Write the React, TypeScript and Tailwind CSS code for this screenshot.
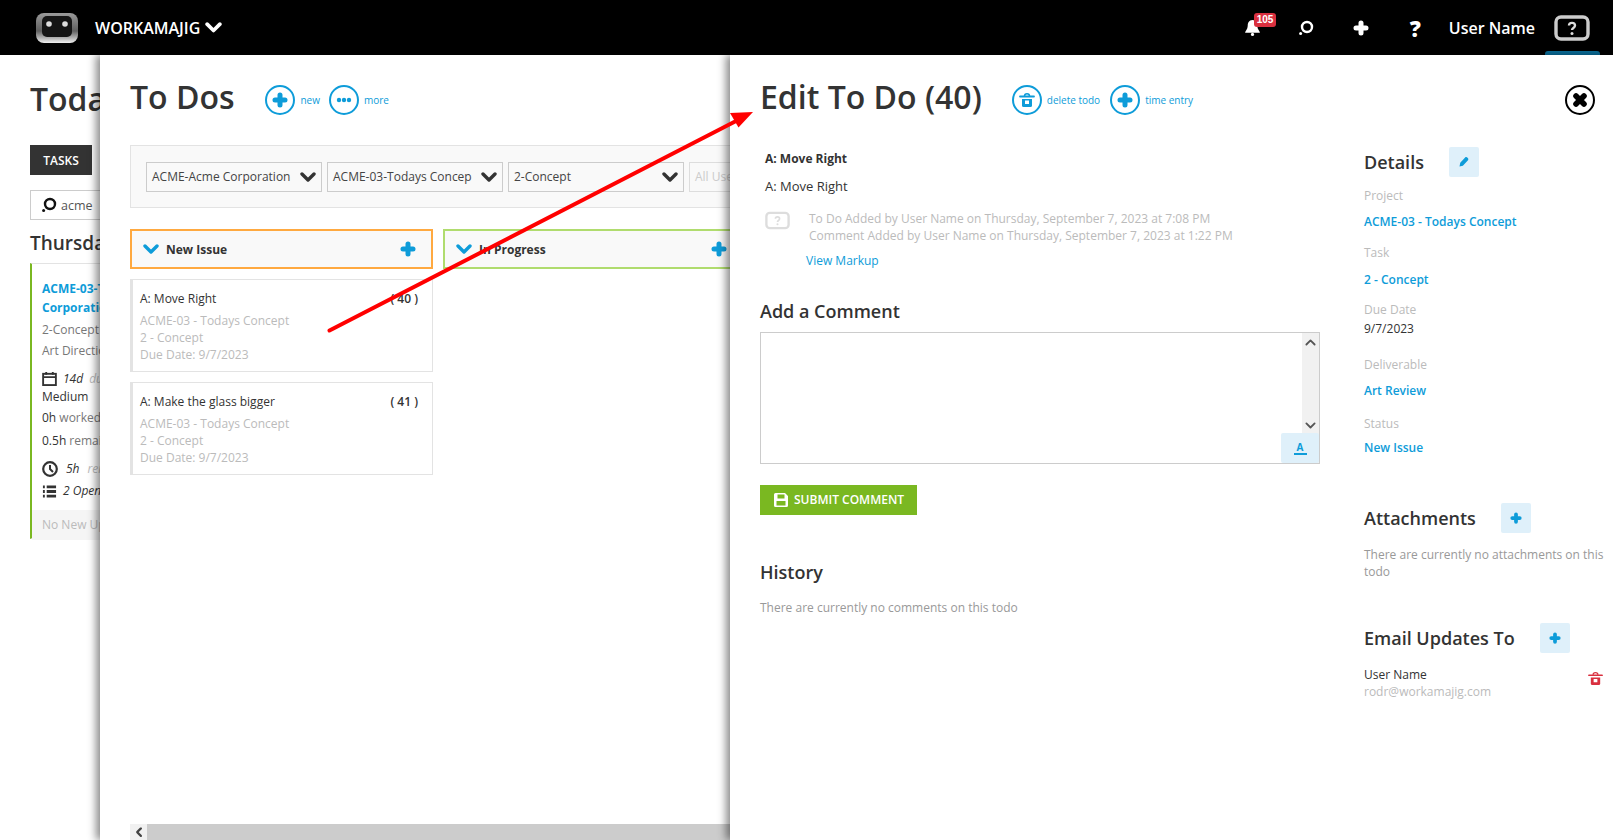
import type { ReactNode } from 'react';

const Plus = ({ className = '', size = 16 }: { className?: string; size?: number }) => (
  <svg viewBox="0 0 16 16" width={size} height={size} className={className}>
    <path d="M8 3v10M3 8h10" stroke="currentColor" strokeWidth="5" strokeLinecap="round" fill="none" />
  </svg>
);

const Chevron = ({ className = '', w = 16, sw = 3.4 }: { className?: string; w?: number; sw?: number }) => (
  <svg viewBox="0 0 16 10" width={w} height={(w * 10) / 16} className={className}>
    <path d="M2 2l6 6 6-6" stroke="currentColor" strokeWidth={sw} fill="none" strokeLinecap="round" strokeLinejoin="round" />
  </svg>
);

const SearchIcon = ({ className = '', size = 16 }: { className?: string; size?: number }) => (
  <svg viewBox="0 0 16 16" width={size} height={size} className={className}>
    <circle cx="9" cy="7" r="5" stroke="currentColor" strokeWidth="2.4" fill="none" />
    <circle cx="2.6" cy="13.6" r="1.5" fill="currentColor" />
  </svg>
);

const Trash = ({ className = '', size = 16 }: { className?: string; size?: number }) => (
  <svg viewBox="0 0 16 16" width={size} height={size} className={className}>
    <path d="M1 4.5h14" stroke="currentColor" strokeWidth="1.8" strokeLinecap="round" />
    <path d="M5.5 4c0-3 5-3 5 0" stroke="currentColor" strokeWidth="1.5" fill="none" />
    <path d="M3 7h10v6.5a1.5 1.5 0 0 1-1.5 1.5h-7A1.5 1.5 0 0 1 3 13.500z" fill="currentColor" />
    <rect x="6" y="8.500" width="4" height="3.500" fill="#fff" />
  </svg>
);

const HelpBox = ({ className = '', w = 36, h = 26, color = '#ccc' }: { className?: string; w?: number; h?: number; color?: string }) => (
  <svg viewBox="0 0 36 26" width={w} height={h} className={className}>
    <rect x="2" y="2" width="32" height="22" rx="5" fill="none" stroke={color} strokeWidth="3.4" />
    <path d="M15 10.500c0-3.500 6-3.500 6 0 0 2.500-3 2.500-3 4.500" fill="none" stroke={color === '#ccc' ? '#ddd' : color} strokeWidth="2.400" />
    <circle cx="18" cy="18.500" r="1.500" fill={color === '#ccc' ? '#ddd' : color} />
  </svg>
);

const CircleAction = ({ icon, label }: { icon: ReactNode; label: string }) => (
  <div className="flex items-center gap-[5px]">
    <span className="flex size-[30px] items-center justify-center rounded-full border-2 border-[#0e9cd9] text-[#0e9cd9]">{icon}</span>
    <span className="pt-[1px] text-[10px] text-[#0e9cd9]">{label}</span>
  </div>
);

const SquareBtn = ({ children }: { children: ReactNode }) => (
  <span className="flex size-[30px] items-center justify-center rounded-[2px] bg-[#dff0fa] text-[#0e9cd9]">{children}</span>
);

const FilterSelect = ({ label, muted }: { label: string; muted?: boolean }) => (
  <div className={`flex h-[30px] w-[176px] shrink-0 items-center justify-between border pl-[5px] pr-[5px] text-[12px] ${muted ? 'border-[#ddd] text-[#ccc]' : 'border-[#ccc] text-[#444]'}`}>
    <span className="whitespace-nowrap pt-[1px]">{label}</span>
    <Chevron className="shrink-0 text-[#333]" />
  </div>
);

const TodoCard = ({ title, id }: { title: string; id: number }) => (
  <div className="h-[93px] border border-l-[3px] border-[#e3e3e3] pl-[7px] pr-[14px] pt-[10px] text-[12px]">
    <div className="flex h-[18px] items-center justify-between text-[#333]">
      <span>{title}</span>
      <span className="font-semibold">( {id} )</span>
    </div>
    <div className="mt-[4px] leading-[17px] text-[#bbb]">
      <div>ACME-03 - Todays Concept</div>
      <div>2 - Concept</div>
      <div>Due Date: 9/7/2023</div>
    </div>
  </div>
);

const ColumnHead = ({ title, className }: { title: string; className: string }) => (
  <div className={`flex h-[40px] shrink-0 items-center border-2 bg-[#f9f9f9] pl-[11px] pr-[15px] ${className}`}>
    <Chevron className="text-[#0e9cd9]" />
    <span className="ml-[7px] flex-1 pt-[1px] text-[12px] font-bold text-[#333]">{title}</span>
    <Plus className="text-[#0e9cd9]" />
  </div>
);

const DetailField = ({ label, value, plain, top, gap = 'mt-[8px]' }: { label: string; value: string; plain?: boolean; top: string; gap?: string }) => (
  <div className={top}>
    <div className="h-[18px] text-[12px] leading-[18px] text-[#bbb]">{label}</div>
    <div className={`h-[18px] text-[12px] leading-[18px] ${gap} ${plain ? 'text-[#333]' : 'font-semibold text-[#0e9cd9]'}`}>{value}</div>
  </div>
);

export default function App() {
  return (
    <div className="relative flex h-[840px] w-[1613px] flex-col overflow-hidden bg-white font-['Open_Sans',sans-serif]">
      {/* Top bar */}
      <header className="relative flex h-[55px] shrink-0 items-center bg-black pl-[35px] pr-[23px] text-white">
        <svg viewBox="0 0 44 32" width="44" height="32">
          <defs>
            <linearGradient id="robot" x1="0" y1="0" x2="0" y2="1">
              <stop offset="0" stopColor="#9a9a9a" />
              <stop offset="0.6" stopColor="#5f5f5f" />
              <stop offset="1" stopColor="#f0f0f0" />
            </linearGradient>
          </defs>
          <rect x="1" y="1" width="42" height="30" rx="8" fill="url(#robot)" />
          <rect x="7" y="4" width="30" height="21" rx="5" fill="#151515" />
          <circle cx="14" cy="12" r="2.800" fill="#ddd" />
          <circle cx="30" cy="12" r="2.800" fill="#ddd" />
        </svg>
        <span className="ml-[16px] text-[16px] font-semibold">WORKAMAJIG</span>
        <Chevron className="ml-[5px]" w={17} />
        <div className="ml-auto flex items-center">
          <span className="relative mr-[37px] block">
            <svg viewBox="0 0 16 16" width="17" height="17">
              <path d="M8 1c3.500 0 4.500 3 4.500 5.500 0 3 2.500 5 2.500 6.500H1c0-1.500 2.500-3.500 2.500-6.500C3.500 4 4.500 1 8 1z" fill="#fff" />
              <circle cx="8" cy="14.500" r="1.500" fill="#fff" />
            </svg>
            <span className="absolute left-[10px] top-[-6px] rounded-[3px] bg-[#d9303f] px-[3px] font-['Liberation_Sans',sans-serif] text-[10px] leading-[14px] font-bold">105</span>
          </span>
          <SearchIcon className="mr-[39px]" />
          <Plus className="mr-[41px]" />
          <span className="mr-[28px] text-[22px] leading-none font-extrabold">?</span>
          <span className="mr-[19px] text-[16px] font-semibold">User Name</span>
          <HelpBox />
        </div>
        <span className="absolute bottom-0 right-[13px] h-[4px] w-[55px] rounded-t-[3px] bg-[#0a6f9c]" />
      </header>

      <main className="relative flex-1">
        {/* Page underneath */}
        <div className="w-[320px] pl-[30px] text-[#333]">
          <h1 className="mt-[20px] h-[47px] text-[32px] leading-[47px] font-semibold">Today</h1>
          <div className="mt-[23px] flex h-[30px] w-[62px] items-center justify-center bg-[#333] pt-[1px] text-[12px] font-semibold text-white">TASKS</div>
          <div className="mt-[15px] flex h-[30px] w-[250px] items-center border border-[#ccc] pl-[10px] text-[12.500px] text-[#555]">
            <SearchIcon className="text-[#111]" />
            <span className="ml-[4px] pt-[2px]">acme</span>
          </div>
          <h2 className="mt-[9px] h-[28px] text-[19px] leading-[28px] font-semibold">Thursday</h2>
          <div className="mt-[6px] h-[276px] w-[290px] border border-l-[2px] border-[#e3e3e3] border-l-[#7ab821] text-[12px]">
            <div className="pl-[10px] pr-2 pt-[15px]">
              <div className="text-[12px] leading-[19px] font-bold whitespace-nowrap text-[#0e9cd9]">ACME-03-Todays<br />Corporation</div>
              <div className="mt-[2px] leading-[21px] text-[#777]">2-Concept</div>
              <div className="leading-[21px] text-[#777]">Art Direction</div>
              <div className="mt-[8px] flex h-[19px] items-center gap-[6px] italic">
                <svg viewBox="0 0 16 16" width="15" height="15">
                  <rect x="1.200" y="3" width="13.600" height="12" fill="none" stroke="#333" strokeWidth="2" />
                  <path d="M1 6.500h14M4.500 1v3M11.500 1v3" stroke="#333" strokeWidth="2" />
                </svg>
                14d <span className="text-[#bbb]">due</span>
              </div>
              <div className="leading-[18px]">Medium</div>
              <div className="mt-[1px] leading-[22px]">0h <span className="text-[#777]">worked</span></div>
              <div className="mt-[1px] leading-[22px]">0.5h <span className="text-[#777]">remaining</span></div>
              <div className="mt-[6px] flex h-[22px] items-center gap-[8px] italic">
                <svg viewBox="0 0 16 16" width="16" height="16">
                  <circle cx="8" cy="8" r="6.800" fill="none" stroke="#333" strokeWidth="2.200" />
                  <path d="M8 4v4l3 3" fill="none" stroke="#333" strokeWidth="2" />
                </svg>
                5h <span className="text-[#bbb]">remaining</span>
              </div>
              <div className="flex h-[22px] items-center gap-[6px] italic">
                <svg viewBox="0 0 16 16" width="15" height="15">
                  <path d="M1 3h2M5 3h10M1 8h2M5 8h10M1 13h2M5 13h10" stroke="#333" strokeWidth="3" />
                </svg>
                2 Open
              </div>
            </div>
            <div className="mt-[8px] h-[30px] bg-[#f5f5f5] pl-[10px] leading-[30px] text-[#bbb]">No New Updates</div>
          </div>
        </div>

        {/* To Dos panel */}
        <section className="absolute inset-y-0 left-[100px] flex w-[630px] flex-col overflow-hidden bg-white shadow-[-4px_0_8px_rgba(0,0,0,0.45)]">
          <div className="flex-1 pl-[30px]">
            <div className="mt-[15px] flex h-[60px] items-center">
              <h1 className="mb-[7px] text-[32px] font-semibold text-[#333]">To Dos</h1>
              <div className="ml-[31px] flex items-center gap-[9px]">
                <CircleAction icon={<Plus />} label="new" />
                <CircleAction
                  icon={
                    <svg viewBox="0 0 16 6" width="16" height="6">
                      <circle cx="3" cy="3" r="2.200" fill="currentColor" />
                      <circle cx="8" cy="3" r="2.200" fill="currentColor" />
                      <circle cx="13" cy="3" r="2.200" fill="currentColor" />
                    </svg>
                  }
                  label="more"
                />
              </div>
            </div>
            <div className="mt-[15px] flex h-[63px] w-[700px] items-center gap-[5px] border border-[#e3e3e3] bg-[#f9f9f9] pl-[15px]">
              <FilterSelect label="ACME-Acme Corporation" />
              <FilterSelect label="ACME-03-Todays Concep" />
              <FilterSelect label="2-Concept" />
              <FilterSelect label="All Users" muted />
            </div>
            <div className="mt-[21px] flex gap-[10px]">
              <div className="flex w-[303px] shrink-0 flex-col gap-[10px]">
                <ColumnHead title="New Issue" className="border-[#ffa940]" />
                <TodoCard title="A: Move Right" id={40} />
                <TodoCard title="A: Make the glass bigger" id={41} />
              </div>
              <ColumnHead title="In Progress" className="w-[301px] border-[#b0dc6e]" />
            </div>
          </div>
          <div className="ml-[30px] flex h-[16px] shrink-0 bg-[#ccc]">
            <span className="flex h-full w-[17px] items-center justify-center bg-[#f1f1f1] text-[#444]">
              <Chevron className="rotate-90" w={10} />
            </span>
          </div>
        </section>

        {/* Edit panel */}
        <section className="absolute inset-y-0 left-[730px] right-0 flex bg-white pl-[30px] shadow-[-4px_0_8px_rgba(0,0,0,0.45)]">
          <div className="w-[560px] shrink-0">
            <div className="mt-[15px] flex h-[60px] items-center">
              <h1 className="mb-[7px] text-[32px] font-semibold text-[#333]">Edit To Do (40)</h1>
              <div className="ml-[30px] flex items-center gap-[10px]">
                <CircleAction icon={<Trash />} label="delete todo" />
                <CircleAction icon={<Plus />} label="time entry" />
              </div>
            </div>
            <div className="mt-[20px] pl-[5px] text-[#333]">
              <div className="text-[12px] leading-[18px] font-bold">A: Move Right</div>
              <div className="mt-[9px] text-[13px] leading-[18px]">A: Move Right</div>
              <div className="mt-[16px] flex">
                <HelpBox w={25} h={19} color="#ddd" />
                <div className="ml-[19px] text-[12px] leading-[16.500px] text-[#bbb]">
                  <div>To Do Added by User Name on Thursday, September 7, 2023 at 7:08 PM</div>
                  <div>Comment Added by User Name on Thursday, September 7, 2023 at 1:22 PM</div>
                </div>
              </div>
              <div className="ml-[41px] mt-[8px] text-[12px] leading-[18px] text-[#0e9cd9]">View Markup</div>
            </div>
            <h2 className="mt-[27px] h-[28px] text-[18px] leading-[28px] font-semibold text-[#333]">Add a Comment</h2>
            <div className="relative mt-[7px] h-[132px] w-[560px] border border-[#ccc]">
              <div className="absolute inset-y-0 right-0 flex w-[17px] flex-col items-center justify-between bg-[#f1f1f1] py-[6px] text-[#555]">
                <Chevron className="rotate-180" w={11} sw={2.6} />
                <Chevron className="mb-[28px]" w={11} sw={2.6} />
              </div>
              <span className="absolute bottom-0 right-0 flex h-[30px] w-[38px] flex-col items-center justify-center rounded-[2px] bg-[#dff0fa] text-[#0e9cd9]">
                <span className="text-[10px] leading-[11px] font-bold">A</span>
                <span className="h-[2px] w-[13px] bg-[#0e9cd9]" />
              </span>
            </div>
            <div className="mt-[21px] flex h-[30px] w-[157px] items-center bg-[#7ab821] pl-[13px] text-[12px] font-semibold text-white">
              <svg viewBox="0 0 16 16" width="16" height="16">
                <path d="M2.500 1h9.500l3 3v9.500a1.500 1.500 0 0 1-1.500 1.500h-11A1.500 1.500 0 0 1 1 13.500v-11A1.500 1.500 0 0 1 2.500 1z" fill="#fff" />
                <rect x="4.500" y="2.500" width="7" height="4" fill="#7ab821" />
                <rect x="3.500" y="9" width="9" height="4.500" fill="#7ab821" />
              </svg>
              <span className="ml-[5px]">SUBMIT COMMENT</span>
            </div>
            <h2 className="mt-[43px] h-[28px] text-[18px] leading-[28px] font-semibold text-[#333]">History</h2>
            <div className="mt-[13px] text-[12px] leading-[18px] text-[#999]">There are currently no comments on this todo</div>
          </div>

          {/* Right column */}
          <aside className="ml-[44px] w-[240px] shrink-0 text-[#333]">
            <div className="mt-[92px] flex items-center">
              <h3 className="w-[85px] pt-[1px] text-[18px] font-semibold">Details</h3>
              <SquareBtn>
                <svg viewBox="0 0 16 16" width="12" height="12">
                  <path d="M2 14l1-5 6.500-7c1-1 2.500-.5 3.500.500s1 2.500 0 3.500L6.500 13z" fill="currentColor" />
                </svg>
              </SquareBtn>
            </div>
            <DetailField top="mt-[10px]" label="Project" value="ACME-03 - Todays Concept" />
            <DetailField top="mt-[13px]" label="Task" value="2 - Concept" gap="mt-[9px]" />
            <DetailField top="mt-[12px]" label="Due Date" value="9/7/2023" plain gap="mt-[1px]" />
            <DetailField top="mt-[18px]" label="Deliverable" value="Art Review" />
            <DetailField top="mt-[15px]" label="Status" value="New Issue" gap="mt-[6px]" />
            <div className="mt-[46px] flex items-center">
              <h3 className="w-[137px] pt-[1px] text-[18px] font-semibold">Attachments</h3>
              <SquareBtn><Plus size={12} /></SquareBtn>
            </div>
            <div className="mt-[13px] text-[12px] leading-[17px] text-[#999]">There are currently no attachments on this todo</div>
            <div className="mt-[43px] flex items-center">
              <h3 className="w-[176px] pt-[1px] text-[18px] font-semibold">Email Updates To</h3>
              <SquareBtn><Plus size={12} /></SquareBtn>
            </div>
            <div className="mt-[13px] flex items-start justify-between">
              <div className="text-[12px] leading-[17px]">
                <div>User Name</div>
                <div className="text-[#bbb]">rodr@workamajig.com</div>
              </div>
              <Trash className="mr-[1px] mt-[5px] text-[#d9303f]" size={15} />
            </div>
          </aside>

          <span className="absolute right-[18px] top-[30px] flex size-[30px] items-center justify-center rounded-full border-2 border-black bg-white">
            <Plus className="rotate-45 text-black" size={18} />
          </span>
        </section>

        {/* Red annotation arrow */}
        <svg className="pointer-events-none absolute left-0 top-[-55px]" width="1613" height="840" viewBox="0 0 1613 840">
          <path d="M329.500 330.500L738 120" stroke="#f00" strokeWidth="4" strokeLinecap="round" />
          <path d="M753 112L730 113L738.500 127.500z" fill="#f00" />
        </svg>
      </main>
    </div>
  );
}
